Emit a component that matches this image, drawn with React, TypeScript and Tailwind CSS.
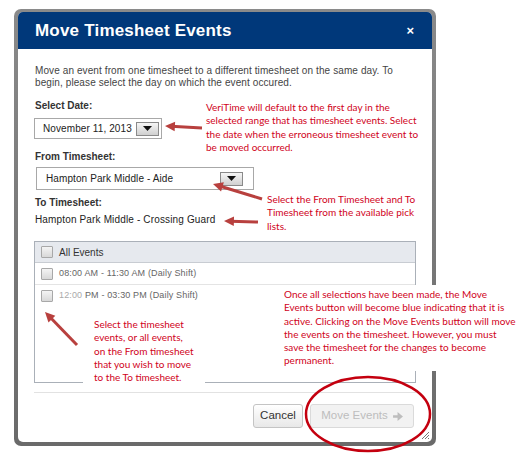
import React from 'react';

const note = "font-['Lato','Open_Sans',sans-serif] text-[10px] leading-[13.3px] text-[#d0021b] whitespace-nowrap";

const Box = () => (
    <span className="inline-block shrink-0 w-[12px] h-[12px] border border-[#a8a8a8] bg-gradient-to-b from-[#f4f4f4] to-[#d8d8d8] rounded-[1px]" />
);

const DropBtn = () => (
    <span className="flex items-center justify-center w-[23px] h-[14px] border border-[#8a8a8a] bg-gradient-to-b from-[#f6f6f6] to-[#d0d0d0]">
        <svg width="9" height="5" viewBox="0 0 9 5"><path d="M0 0h9L4.5 5z" fill="#111" /></svg>
    </span>
);

const Arrow = ({ x1, y1, x2, y2 }: { x1: number; y1: number; x2: number; y2: number }) => {
    const a = Math.atan2(y2 - y1, x2 - x1);
    const L = 11, W = 0.45;
    const p1 = `${x2 - L * Math.cos(a - W)},${y2 - L * Math.sin(a - W)}`;
    const p2 = `${x2 - L * Math.cos(a + W)},${y2 - L * Math.sin(a + W)}`;
    return (
        <g>
            <line x1={x1} y1={y1} x2={x2 - 6 * Math.cos(a)} y2={y2 - 6 * Math.sin(a)} stroke="#b8403e" strokeWidth="3" />
            <polygon points={`${x2},${y2} ${p1} ${p2}`} fill="#b8403e" />
        </g>
    );
};

export default function App() {
    return (
        <div className="relative w-[525px] h-[461px] bg-white overflow-hidden font-['Liberation_Sans',Arial,sans-serif]">
            <div className="ml-[14px] mt-[9px] w-[422px] h-[437px] rounded-[7px] pt-[3px] px-[4px] pb-[4px] bg-gradient-to-b from-[#8a8a8a] to-[#6a6a6a]">
                <div className="flex flex-col h-full bg-white rounded-[5px] overflow-hidden">
                    <div className="flex shrink-0 items-center justify-between h-[37px] pl-[17px] pr-[18px] bg-[#00387a]">
                        <span className="text-[17px] font-bold text-white tracking-[0.2px]">Move Timesheet Events</span>
                        <span className="text-[13px] font-bold text-white">×</span>
                    </div>
                    <div className="flex flex-col flex-1 px-[16px] pt-[16px] text-[#333]">
                        <p className="pl-[1px] text-[10px] leading-[12px] tracking-[0.1px] text-[#444]">
                            Move an event from one timesheet to a different timesheet on the same day. To begin, please select the day on which the event occured.
                        </p>
                        <div className="mt-[11px] pl-[1px] text-[10px] leading-[12px] font-bold text-[#333]">Select Date:</div>
                        <div className="mt-[6px] flex items-center justify-between w-[128px] h-[21px] border border-[#a8a8a8] pl-[8px] pr-[2px]">
                            <span className="text-[10px] text-[#222] tracking-[0.1px]">November 11, 2013</span>
                            <DropBtn />
                        </div>
                        <div className="mt-[12px] pl-[1px] text-[10px] leading-[12px] font-bold text-[#333]">From Timesheet:</div>
                        <div className="mt-[4px] ml-[2px] flex items-center justify-between w-[218px] h-[23px] border border-[#a8a8a8] pl-[9px] pr-[10px]">
                            <span className="text-[10px] text-[#222] tracking-[0.1px]">Hampton Park Middle - Aide</span>
                            <DropBtn />
                        </div>
                        <div className="mt-[7px] pl-[1px] text-[10px] leading-[12px] font-bold text-[#333]">To Timesheet:</div>
                        <div className="mt-[5px] pl-[1px] text-[10px] leading-[12px] text-[#222] tracking-[0.15px]">Hampton Park Middle - Crossing Guard</div>
                        <div className="mt-[15px] flex flex-col shrink-0 h-[142px] border border-[#aab0b8]">
                            <div className="flex items-center gap-[6px] h-[21px] px-[6px] bg-[#e6e9ee] border-b border-[#c8ccd2] text-[10px] text-[#333]">
                                <Box />
                                <span>All Events</span>
                            </div>
                            <div className="flex items-center gap-[6px] h-[22px] px-[6px] border-b border-[#e4e4e4] text-[9px] text-[#666] tracking-[0.15px]">
                                <Box />
                                <span>08:00 AM - 11:30 AM (Daily Shift)</span>
                            </div>
                            <div className="flex items-center gap-[6px] h-[22px] px-[6px] text-[9px] text-[#666] tracking-[0.15px]">
                                <Box />
                                <span><span className="text-[#aaa]">12:00</span> PM - 03:30 PM (Daily Shift)</span>
                            </div>
                        </div>
                        <div className="mt-[9px] border-t border-[#e2e2e2]" />
                        <div className="flex justify-end gap-[7px] mt-[11px] mr-[2px]">
                            <span className="flex items-center justify-center w-[50px] h-[24px] rounded-[3px] border border-[#c4c4c4] bg-gradient-to-b from-white to-[#e8e8e8] text-[11.5px] text-[#333]">Cancel</span>
                            <span className="flex items-center justify-center gap-[5px] w-[104px] h-[24px] rounded-[3px] border border-[#dadada] bg-[#f2f2f2] text-[11.5px] text-[#bdbdbd]">
                                Move Events
                                <svg width="10" height="9" viewBox="0 0 11 10"><path d="M0 3.5h5V0l6 5-6 5V6.5H0z" fill="#bdbdbd" /></svg>
                            </span>
                        </div>
                        <div className="flex-1" />
                        <div className="flex justify-end mr-[-14px] mb-[2px]">
                            <svg width="10" height="10" viewBox="0 0 10 10"><path d="M9 2L2 9M9 5L5 9M9 8L8 9" stroke="#777" strokeWidth="1" /></svg>
                        </div>
                    </div>
                </div>
            </div>

            <div className={`absolute left-[206px] top-[101px] ${note}`}>
                VeriTime will default to the first day in the<br />
                selected range that has timesheet events. Select<br />
                the date when the erroneous timesheet event to<br />
                be moved occurred.
            </div>
            <div className={`absolute left-[267px] top-[193px] ${note}`}>
                Select the From Timesheet and To<br />
                Timesheet from the available pick<br />
                lists.
            </div>
            <div className={`absolute left-[276px] top-[285px] w-[244px] bg-white pl-[8px] pr-[2px] pt-[3px] pb-[3px] ${note}`}>
                Once all selections have been made, the Move<br />
                Events button will become blue indicating that it is<br />
                active. Clicking on the Move Events button will move<br />
                the events on the timesheet. However, you must<br />
                save the timesheet for the changes to become<br />
                permanent.
            </div>
            <div className={`absolute left-[83px] top-[317px] w-[122px] bg-white pl-[11px] pr-[3px] pt-[1px] pb-[5px] ${note}`}>
                Select the timesheet<br />
                events, or all events,<br />
                on the From timesheet<br />
                that you wish to move<br />
                to the To timesheet.
            </div>

            <svg className="absolute inset-0 pointer-events-none" width="525" height="461">
                <Arrow x1={202} y1={128} x2={165} y2={126} />
                <Arrow x1={262} y1={199} x2={213} y2={184} />
                <Arrow x1={258} y1={222} x2={224} y2={221} />
                <Arrow x1={77} y1={345} x2={45} y2={312} />
                <ellipse cx="368" cy="414" rx="62" ry="37" fill="none" stroke="#c4000f" strokeWidth="2.5" />
            </svg>
        </div>
    );
}
